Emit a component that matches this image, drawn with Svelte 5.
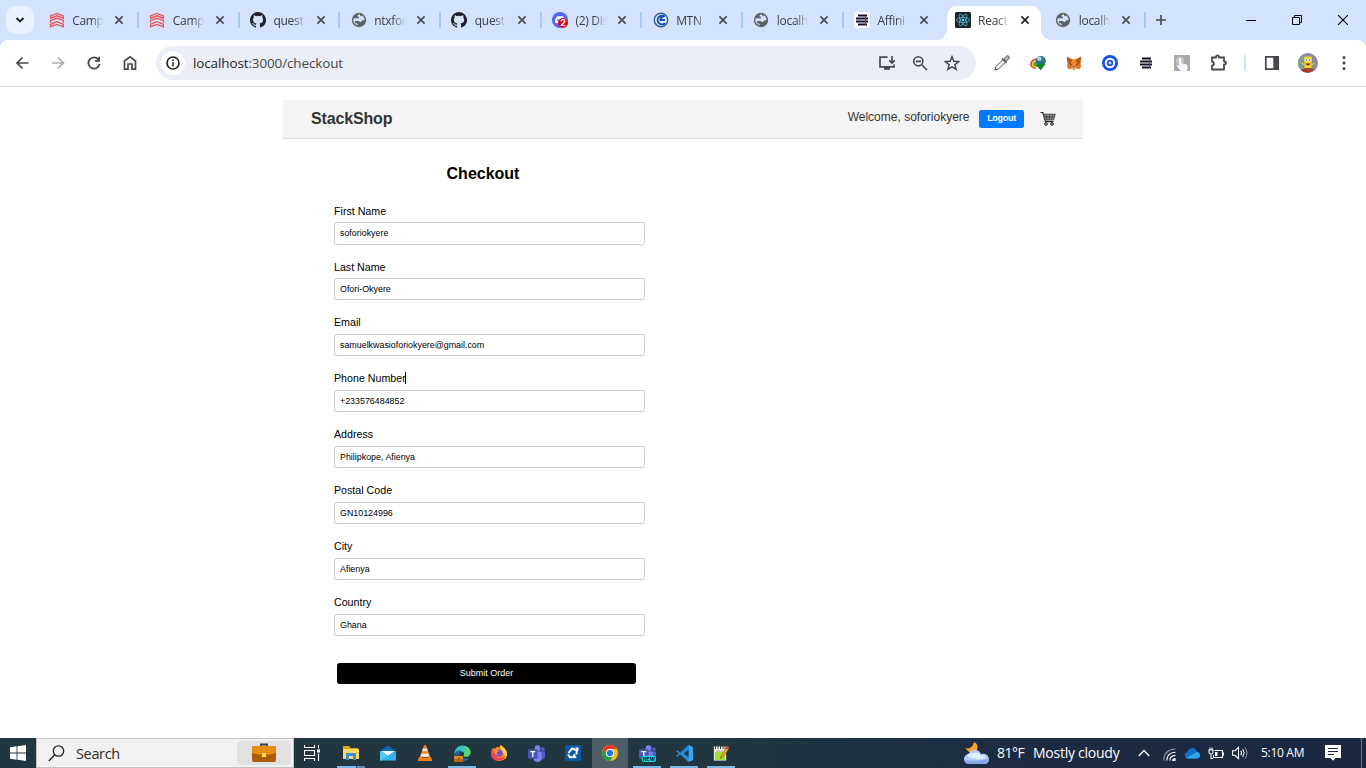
<script>
  const tabs = [
    { icon: 'campus', title: 'Camp' },
    { icon: 'campus', title: 'Camp' },
    { icon: 'github', title: 'quest-' },
    { icon: 'globe', title: 'ntxfor' },
    { icon: 'github', title: 'quest-' },
    { icon: 'discord', title: '(2) Dis' },
    { icon: 'mtn', title: 'MTN' },
    { icon: 'globe', title: 'localh' },
    { icon: 'affinity', title: 'Affini' },
    { icon: 'react', title: 'React', active: true },
    { icon: 'globe', title: 'localh' }
  ];
  const extensions = ['pipette', 'idm', 'fox', 'ring', 'stripes', 'hand', 'puzzle'];
  const fields = [
    { label: 'First Name', value: 'soforiokyere' },
    { label: 'Last Name', value: 'Ofori-Okyere' },
    { label: 'Email', value: 'samuelkwasioforiokyere@gmail.com' },
    { label: 'Phone Number', value: '+233576484852', caret: true },
    { label: 'Address', value: 'Philipkope, Afienya' },
    { label: 'Postal Code', value: 'GN10124996' },
    { label: 'City', value: 'Afienya' },
    { label: 'Country', value: 'Ghana' }
  ];
  const apps = [
    { icon: 'explorer', open: true, multi: true },
    { icon: 'mail' },
    { icon: 'vlc' },
    { icon: 'edge', open: true },
    { icon: 'firefox' },
    { icon: 'teams' },
    { icon: 'sync' },
    { icon: 'chrome', active: true },
    { icon: 'teamsnew', open: true },
    { icon: 'vscode', open: true },
    { icon: 'notepad', open: true }
  ];
</script>

{#snippet stripes()}
  <path d="M4 3.5h9M2 6.5h12M2 9.5h12M4 12.5h9" stroke="#12122c" stroke-width="1.8" fill="none" />
  <path d="M11.5 4v9" stroke="#2646ff" stroke-width="1" />
{/snippet}

{#snippet teams()}
  <circle cx="9" cy="3" r="2.7" fill="#7b83eb" /><circle cx="14" cy="4" r="1.8" fill="#5059c9" />
  <path d="M10 6h6v5a3 3 0 0 1-4 2.6z" fill="#5059c9" />
  <path d="M5 6h8v6a4 4 0 0 1-8 0z" fill="#7b83eb" />
  <rect x="0" y="4" width="9" height="9" rx="1" fill="#4b53bc" />
  <path d="M2.2 6.3h4.6M4.5 6.3v5" stroke="#fff" stroke-width="1.2" />
{/snippet}

{#snippet glyph(name)}
  {#if name === 'campus'}
    <svg width="16" height="16" viewBox="0 0 16 16"><g fill="none" stroke="#ec5459" stroke-width="1.3"><path d="M1.5 6.2V4L8 1.4 14.4 4v2.2L8 3.8z" /><path d="M1.5 10.7V8.5L8 6.3l6.4 2.2v2.2" /><path d="M1.500 14.800v-2.500L8 9.700l6.400 2.600v2.500L8 12.400z" /></g></svg>
  {:else if name === 'github'}
    <svg width="16" height="16" viewBox="0 0 16 16"><path fill="#1f2328" d="M8 0a8 8 0 0 0-2.53 15.59c.4.07.55-.17.55-.38v-1.49c-2.01.37-2.53-.49-2.69-.94-.09-.23-.48-.94-.82-1.13-.28-.15-.68-.52-.01-.53.63-.01 1.08.58 1.23.82.72 1.21 1.87.87 2.33.66.07-.52.28-.87.51-1.07-1.78-.2-3.64-.89-3.64-3.95 0-.87.31-1.59.82-2.15-.08-.2-.36-1.02.08-2.12 0 0 .67-.21 2.2.82a7.4 7.4 0 0 1 4 0c1.53-1.04 2.2-.82 2.2-.82.44 1.1.16 1.92.08 2.12.51.56.82 1.27.82 2.15 0 3.07-1.87 3.75-3.65 3.95.29.25.54.73.54 1.48v2.2c0 .21.15.46.55.38A8 8 0 0 0 8 0z" /></svg>
  {:else if name === 'globe'}
    <svg width="16" height="16" viewBox="0 0 16 16"><circle cx="8" cy="8" r="7.2" fill="#5f6368" /><path d="M9 2.3C7.300 2.500 6.500 3.300 6.700 4.200c.2.700 1.300.5 1.300 1.300 0 .9-1.100 1-2.200.9-1.700-.1-2.500-.1-3.400.4A5.700 5.700 0 0 0 6.800 13.500c.2-1-.8-1.500-1.200-2.300H4V9h3.500c1 .1.900 1.100 1.900 1.100 1.100 0 .9-1.100 1.800-1.500.9-.3 1.700-.1 2.500-.5A5.700 5.700 0 0 0 11 3.200c-.3 1.200-1.800 1.400-2 .6z" fill="#d3e3fd" /></svg>
  {:else if name === 'discord'}
    <svg width="16" height="16" viewBox="0 0 16 16"><circle cx="8" cy="8" r="8" fill="#5865f2" /><path d="M4.700 4.800 7 4.100l1 .5 1-.5 2.600.7 1.600 3.800v2l-2.500 1-1-1.200H6.300l-1 1.200-2.400-1 .3-3z" fill="#fff" /><circle cx="6.200" cy="8.100" r="1" fill="#5865f2" /><circle cx="11" cy="11" r="5" fill="#e00b16" /><text x="11" y="14.200" text-anchor="middle" font-family="Inter, sans-serif" font-weight="700" font-size="9" fill="#fff">2</text></svg>
  {:else if name === 'mtn'}
    <svg width="16" height="16" viewBox="0 0 16 16"><rect width="16" height="16" fill="#dce1e8" /><circle cx="8" cy="8" r="6.700" fill="#e8effa" stroke="#2458ac" stroke-width="1.400" /><path d="M11.700 4.800A4.300 4.300 0 1 0 12 11M12 8H7.500c0-2 1-3.300 3.200-4" fill="none" stroke="#1751b6" stroke-width="2" /></svg>
  {:else if name === 'affinity'}
    <svg width="16" height="16" viewBox="0 0 16 16"><rect width="16" height="16" rx="2" fill="#fff" />{@render stripes()}</svg>
  {:else if name === 'react'}
    <svg width="16" height="16" viewBox="0 0 16 16"><rect width="16" height="16" rx="1.500" fill="#20232a" /><g fill="none" stroke="#53bdd8" stroke-width=".8"><ellipse cx="8" cy="8" rx="6.600" ry="2.500" /><ellipse cx="8" cy="8" rx="6.600" ry="2.500" transform="rotate(60 8 8)" /><ellipse cx="8" cy="8" rx="6.600" ry="2.500" transform="rotate(120 8 8)" /></g><circle cx="8" cy="8" r="1.300" fill="#61dafb" /></svg>
  {:else if name === 'pipette'}
    <svg width="16" height="16" viewBox="0 0 16 16"><g fill="none" stroke="#46484c" stroke-width="1"><path d="M9 4.500 2 11.500l-1.200 3.600 3.700-1.100 7-7z" /><path d="m8 3.500 4.500 4.500" stroke-width="1.300" /><path d="m9.700 4.200 2.600-2.900a1.700 1.700 0 0 1 2.500 2.500l-2.900 2.600z" fill="#bbb" /></g></svg>
  {:else if name === 'idm'}
    <svg width="16" height="16" viewBox="0 0 16 16"><g fill="none" stroke-width="1.7"><path d="M7 4.200Q1 5 1 9.500q.5 3 5 3.500" stroke="#e8412e" /><path d="M7.500 5.800Q2.600 6.500 2.600 9.500q.5 2 4 2.500" stroke="#f7cd38" /><path d="M8 7.300Q4.200 7.500 4.200 9.500q.5 1 3 1.500" stroke="#35a43a" /></g><circle cx="10.800" cy="6" r="5.100" fill="#2c69a4" /><circle cx="9.300" cy="3.800" r="2.300" fill="#a8d7ee" /><path d="M12 2q3 1 3.800 4L13 8z" fill="#3b8b3a" /><path d="m5.500 9.500 3.200-.5V7h3.500v2l3.300.3-4.900 6z" fill="#168322" /></svg>
  {:else if name === 'fox'}
    <svg width="16" height="16" viewBox="0 0 18 16"><path d="m1 1 6 3h4l6-3-1 7 1 4-2 3-4-1-1 2H8l-1-2-4 1-2-3 1-4z" fill="#e2761b" /><path d="m1 1 6 3-1 4-4 1zM17 1l-6 3 1 4 4 1z" fill="#b9571c" /><path d="m7 4-1 4 2 4h2l2-4-1-4z" fill="#f08b2d" /><path d="m4.500 8.300 2.800 1.800-2.500.2zM13.500 8.300l-2.800 1.800 2.500.2z" fill="#333a48" /><path d="m7.500 12-.4 2 1 1h1.800l1-1-.4-2z" fill="#d5bfb2" /><path d="M8 12h2l-.4 1.200H8.400z" fill="#222" /></svg>
  {:else if name === 'ring'}
    <svg width="16" height="16" viewBox="0 0 16 16"><circle cx="8" cy="8" r="8" fill="#1652f0" /><circle cx="8" cy="8" r="4.200" fill="none" stroke="#fff" stroke-width="2" /><circle cx="8" cy="8" r="1.400" fill="#dce6ff" /></svg>
  {:else if name === 'stripes'}
    <svg width="16" height="16" viewBox="0 0 16 16">{@render stripes()}</svg>
  {:else if name === 'hand'}
    <svg width="16" height="16" viewBox="0 0 16 16"><rect width="16" height="16" rx="1" fill="#a8a8a8" /><circle cx="6" cy="5.500" r="4" fill="#c6c6c6" /><path d="M5 4.200a1 1 0 0 1 2.200 0v4l4.800 1c1.500.4 2 1.400 1.600 3L13 16H6.700L2.800 11c-.5-1 .7-1.500 1.500-.8l.8.7z" fill="#f5f8ff" /></svg>
  {:else if name === 'puzzle'}
    <svg width="18" height="18" viewBox="0 0 18 18"><path d="M3 3.500h4V3a1.500 1.500 0 0 1 3 0v.5h5v4h.5a1.500 1.500 0 0 1 0 3H15v5H3v-3.800c2.600-.4 2.600-3.700 0-4.200z" fill="none" stroke="#46484c" stroke-width="1.800" stroke-linejoin="round" /></svg>
  {:else if name === 'explorer'}
    <svg width="16" height="16" viewBox="0 0 16 16"><path d="M0 1h6l1.500 2H15v4H0z" fill="#e3a21a" /><path d="M0 4h16v10H0z" fill="#fdd663" /><path d="M3 8h10v7h-3v-4H6v4H3z" fill="#4191d9" /></svg>
  {:else if name === 'mail'}
    <svg width="16" height="16" viewBox="0 0 16 16"><path d="m0 6 8-5.500L16 6v9H0z" fill="#1267b2" /><path d="M1 6h14L8 11z" fill="#eef7ff" /><path d="m0 6 8 5 8-5v9.500H0z" fill="#35b1f0" /><path d="m0 6 8 5-7 4.500H0z" fill="#5cc9f8" /></svg>
  {:else if name === 'vlc'}
    <svg width="16" height="16" viewBox="0 0 16 16"><path d="M7 0h2l4.200 12H2.800z" fill="#ef7913" /><path d="m5.900 3.500-.8 2.700h5.800l-.9-2.700zM4.300 8.500 3.600 11q4.400 2 8.800 0l-.8-2.500z" fill="#eee" /><path d="M2 12h2q4 1.600 8 0h2l1.200 4H.8z" fill="#f18316" /></svg>
  {:else if name === 'edge'}
    <svg width="17" height="17" viewBox="0 0 17 17"><path d="M.5 9C.5 4 4 .5 8.500.5c4.500 0 8 3 8 6.700 0 3-2.200 4.600-4.700 4.600-1.800 0-2.600-.8-2-1.700.7-1.200.2-3.600-2.800-3.600C4 6.500 1.500 8 .5 9" fill="#3cc3c0" /><path d="M11 1c3.500 1 5.500 3.500 5.500 6.200 0 3-2.200 4.600-4.700 4.600-1.800 0-2.600-.8-2-1.700C11 7 11 3 11 1" fill="#5fd36a" /><path d="M.5 9c1-3 4-4.500 7-3.500C5.500 6.500 5.300 9 6.500 11c1.700 2.600 5.500 3.300 9 1.700-2.500 4-8 4.800-11.500 2.300Q.5 13 .5 9" fill="#1769b5" /><path d="M0 11h9v6H0z" fill="#dc8a16" /><path d="M0 14h9v3H0z" fill="#b06a0c" /><path d="M3 11V9.800h3V11M4 13.500h1.400" stroke="#6b390a" fill="none" /></svg>
  {:else if name === 'firefox'}
    <svg width="16" height="16" viewBox="0 0 16 16"><path d="M2 3c1 0 1 1 2 1 1-2 2-2 4-2 1 0 1-1 1-2 3 1 6 4 7 8 0 5-3 8-8 8-5 0-8-4-8-8 0-2 1-4 2-5" fill="#ff8b20" /><path d="M9 0c3 2 6 4 7 8 0 3-1 5-2 6 0-4-1-6-3-7 0-2-2-3-2-7" fill="#ffd43b" /><path d="M0 9c0 5 5 8 10 6 3-1 5-4 5-5-3 4-10 4-11-1-2-1-2-3-2-5-2 1-2 3-2 5" fill="#f43f54" /><circle cx="8" cy="8.200" r="3.600" fill="#8648d6" /><path d="M4 5c2 0 3 0 4 1L6 7c-1 1 0 3 2 3-2 1-4-1-4-3z" fill="#ffa52c" /></svg>
  {:else if name === 'teams'}
    <svg width="17" height="17" viewBox="0 0 16 16">{@render teams()}</svg>
  {:else if name === 'teamsnew'}
    <svg width="17" height="17" viewBox="0 0 16 16">{@render teams()}<rect x="2.500" y="10" width="13.500" height="6" rx="2" fill="#19d9df" /><text x="9.300" y="14.800" text-anchor="middle" font-family="Inter, sans-serif" font-weight="800" font-size="4.800" fill="#102d36">NEW</text></svg>
  {:else if name === 'sync'}
    <svg width="16" height="16" viewBox="0 0 16 16"><rect width="16" height="16" rx="1.500" fill="#0c58a5" /><path d="M3.500 8 7 3.500 12 5.200 11.300 9.500" fill="none" stroke="#fff" stroke-width="2" /><path d="M3 9.500 5 12.300 10 12 8.500 9.300" fill="none" stroke="#fff" stroke-width="2" /><path d="M10 2.500h3.500V6z" fill="#fff" /></svg>
  {:else if name === 'chrome'}
    <svg width="16" height="16" viewBox="0 0 16 16"><circle cx="8" cy="8" r="8" fill="#fbc116" /><path d="M1.100 4A8 8 0 0 1 15 4.100H8A4 4 0 0 0 4.500 10z" fill="#e33b2e" /><path d="M1.100 4A8 8 0 0 0 8 16l3.500-6A4 4 0 0 1 4.500 10z" fill="#229a4a" /><circle cx="8" cy="8" r="4" fill="#fff" /><circle cx="8" cy="8" r="3.100" fill="#1a73e8" /></svg>
  {:else if name === 'vscode'}
    <svg width="17" height="17" viewBox="0 0 16 16"><path d="M11.600 0 16 2v12l-4.400 2L4 8.900 1.300 11 0 10.300 2.600 8 0 5.700 1.300 5 4 7.100zM12 4.500 7.200 8l4.800 3.500z" fill="#2389d7" fill-rule="evenodd" /><path d="M12 .2 16 2v12l-4 1.800z" fill="#39a7f2" /></svg>
  {:else if name === 'notepad'}
    <svg width="16" height="16" viewBox="0 0 16 16"><rect x="1" y="1.500" width="12" height="14" fill="#f5f5ec" stroke="#aaa" stroke-width=".5" /><path d="M2 7h10v8H2z" fill="#a8df35" /><path d="M2.500 0v4M5 0v4M7.500 0v4M10 0v4M12 0v4" stroke="#333" stroke-width=".9" /><path d="M3 6h7" stroke="#999" /><path d="m8 11 5-8 2.500 1.500L10 12l-2.500 1.500z" fill="#f9aa18" stroke="#503b18" stroke-width=".5" /><path d="m13 3 1-2 2 1-.5 2.500z" fill="#d84d36" /></svg>
  {/if}
{/snippet}

<div class="screen">
  <div class="tabstrip">
    <div class="chev"><svg width="10" height="10" viewBox="0 0 10 10"><path d="m1.500 3 3.500 3.500L8.500 3" fill="none" stroke="#1f1f1f" stroke-width="1.900" /></svg></div>
    {#each tabs as tab, i}
      <div class="tab" class:active={tab.active} class:before={tabs[i + 1]?.active} class:after={tabs[i - 1]?.active}>
        {@render glyph(tab.icon)}
        <span class="title">{tab.title}</span>
        <svg class="close" width="10" height="10" viewBox="0 0 10 10"><path d="m1.400 1.400 7.200 7.200M8.600 1.400 1.400 8.600" stroke={tab.active ? '#1f1f1f' : '#46484c'} stroke-width="1.600" /></svg>
      </div>
    {/each}
    <svg class="plus" width="12" height="12" viewBox="0 0 12 12"><path d="M6 1v10M1 6h10" stroke="#46484c" stroke-width="1.600" /></svg>
    <div class="wincontrols">
      <svg width="10" height="10" viewBox="0 0 10 10"><path d="M0 5.500h10" stroke="#000" /></svg>
      <svg width="10" height="10" viewBox="0 0 10 10"><path d="M.5 2.500h7v7h-7zM2.500 2.500v-2h7v7h-2" fill="none" stroke="#000" /></svg>
      <svg width="10" height="10" viewBox="0 0 10 10"><path d="m0 0 10 10M10 0 0 10" stroke="#000" stroke-width="1.100" /></svg>
    </div>
  </div>

  <div class="toolbar">
    <div class="btn"><svg width="16" height="16" viewBox="0 0 16 16"><path d="M14.500 8H3M8.500 2.500 3 8l5.500 5.500" fill="none" stroke="#46484c" stroke-width="1.700" /></svg></div>
    <div class="btn"><svg width="16" height="16" viewBox="0 0 16 16"><path d="M2 8h11M8 2.500 13.500 8 8 13.500" fill="none" stroke="#adadad" stroke-width="1.700" /></svg></div>
    <div class="btn"><svg width="16" height="16" viewBox="0 0 16 16"><path d="M13.500 9A5.600 5.600 0 1 1 12.300 4.400L13.500 6" fill="none" stroke="#46484c" stroke-width="1.800" /><path d="M14 1.700v5H9V5h3.300V1.700z" fill="#46484c" /></svg></div>
    <div class="btn"><svg width="16" height="16" viewBox="0 0 16 16"><path d="M2.500 6 8 1.800 13.500 6v8.200H10V9H6v5.200H2.500z" fill="none" stroke="#46484c" stroke-width="1.700" /></svg></div>
    <div class="omnibox">
      <div class="info"><svg width="14" height="14" viewBox="0 0 14 14"><circle cx="7" cy="7" r="6" fill="none" stroke="#1f1f1f" stroke-width="1.600" /><path d="M7 6.200v4M7 3.600v1.500" stroke="#1f1f1f" stroke-width="1.500" /></svg></div>
      <span class="url"><b>localhost</b>:3000/checkout</span>
      <div class="obtns">
        <svg width="18" height="16" viewBox="0 0 18 16"><path d="M9.500 2.200H2v9.600h14V9.500M14 1v7M11.200 5.300 14 8l2.800-2.700" fill="none" stroke="#46484c" stroke-width="1.700" /><path d="M6 12h6v2.800H6z" fill="#46484c" /></svg>
        <svg width="16" height="16" viewBox="0 0 16 16"><path d="M10 10l5 5M4 6.300h5" stroke="#46484c" stroke-width="1.700" /><circle cx="6.300" cy="6.300" r="4.600" fill="none" stroke="#46484c" stroke-width="1.600" /></svg>
        <svg width="16" height="16" viewBox="0 0 16 16"><path d="m8 1.800 1.800 4.500 4.800.3-3.700 3.100 1.200 4.700L8 11.900l-4.100 2.500 1.200-4.700-3.700-3.100 4.800-.3z" fill="none" stroke="#46484c" stroke-width="1.500" /></svg>
      </div>
    </div>
    {#each extensions as name}
      <div class="btn">{@render glyph(name)}</div>
    {/each}
    <div class="divider"></div>
    <div class="btn"><svg width="16" height="16" viewBox="0 0 16 16"><path d="M1.800 1.800h12.400v12.400H1.800z" fill="none" stroke="#46484c" stroke-width="1.700" /><path d="M9.300 1.500H15v13H9.300z" fill="#46484c" /></svg></div>
    <div class="btn"><svg width="20" height="20" viewBox="0 0 20 20"><circle cx="10" cy="10" r="10" fill="#9384a4" /><path d="M0 10a10 10 0 0 1 8-9.800L5 10l1 9A10 10 0 0 1 0 10" fill="#7f9f8e" /><path d="M3 16h14a10 10 0 0 1-13 2z" fill="#b8322f" /><path d="M6 4q4-1.500 8 0l-.5 11h-7z" fill="#f0d62d" /><circle cx="8.500" cy="7" r="1.500" fill="#fff" /><circle cx="11.700" cy="7" r="1.500" fill="#fff" /><circle cx="8.600" cy="7" r=".8" fill="#29557b" /><circle cx="11.600" cy="7" r=".8" fill="#29557b" /><path d="M7.300 10.500h5.400q-2.700 4-5.400 0" fill="#7c251a" /><path d="M6.500 15h7v2h-7z" fill="#8e531d" /><path d="M3.500 9.500 6 12M16.500 9.500 14 12" stroke="#e4c928" stroke-width="1.400" /></svg></div>
    <div class="btn"><svg width="4" height="16" viewBox="0 0 4 16"><g fill="#46484c"><circle cx="2" cy="2.600" r="1.500" /><circle cx="2" cy="8" r="1.500" /><circle cx="2" cy="13.400" r="1.500" /></g></svg></div>
  </div>

  <main>
    <nav>
      <span class="brand">StackShop</span>
      <span class="welcome">Welcome, soforiokyere</span>
      <span class="logout">Logout</span>
      <svg class="cart" width="16" height="16" viewBox="0 0 16 16"><path d="M.5 1.500h2.300l2.700 9.200h8" fill="none" stroke="#222" stroke-width="1.200" /><path d="M3.600 3.200h11.700L13.500 9H5.300z" fill="#999" stroke="#333" stroke-width=".8" /><path d="M6.300 3.500 7 9M9.300 3.500V9M12.400 3.500 11.700 9M4.300 6h10.200" stroke="#333" stroke-width=".8" /><circle cx="6" cy="13" r="1.300" fill="#ddd" stroke="#111" /><circle cx="12" cy="13" r="1.300" fill="#ddd" stroke="#111" /></svg>
    </nav>
    <form>
      <h2>Checkout</h2>
      {#each fields as f}
        <div class="group">
          <div class="label">{f.label}{#if f.caret}<i class="caret"></i>{/if}</div>
          <div class="field">{f.value}</div>
        </div>
      {/each}
      <div class="submit">Submit Order</div>
    </form>
  </main>

  <div class="taskbar">
    <div class="start"><svg width="16" height="16" viewBox="0 0 16 16"><path d="M0 2.200 6.600 1.300v6.200H0zM7.400 1.200 16 0v7.500H7.400zM0 8.400h6.600v6.300L0 13.800zM7.400 8.400H16V16l-8.600-1.200z" fill="#fff" /></svg></div>
    <div class="search">
      <svg width="17" height="17" viewBox="0 0 17 17"><circle cx="10.500" cy="6" r="5.200" fill="none" stroke="#222" stroke-width="1.300" /><path d="M6.700 9.800.8 15.900" stroke="#222" stroke-width="1.400" /></svg>
      <span>Search</span>
      <div class="promo"><svg width="24" height="20" viewBox="0 0 24 20"><path d="M9 4V1.500h6V4" fill="none" stroke="#3d3d3d" stroke-width="1.800" /><rect y="3" width="24" height="16" rx="2" fill="#a95b09" /><path d="M0 5a2 2 0 0 1 2-2h20a2 2 0 0 1 2 2v5q-12 4-24 0z" fill="#e58d10" /><rect x="10" y="10" width="4" height="4" fill="#ffe03f" /></svg></div>
    </div>
    <div class="app view"><svg width="16" height="16" viewBox="0 0 16 16"><path d="M.5 0v2.500h10V0M.5 16v-2.500h10V16M.5 5.500h10v5H.5zM14.500 0v3.500M14.500 8.500V16" fill="none" stroke="#fff" stroke-width="1.100" /><path d="M13 4.500h3v3h-3z" fill="#fff" /></svg></div>
    {#each apps as app}
      <div class="app" class:open={app.open} class:multi={app.multi} class:current={app.active}>{@render glyph(app.icon)}</div>
    {/each}
    <div class="tray">
      <svg class="weather" width="25" height="24" viewBox="0 0 25 24"><path d="M10 1q5 2 3 8-2 4-8 2L1 7q7 2 9-6" fill="#f7a42b" /><path d="M5 23a5 5 0 0 1 0-10q2-5 7-4 3 0 5 4 7-1 8 5 0 5-5 5z" fill="#b4cdf7" /><path d="M5 23a5 5 0 0 1-4.600-4q10 2 24.500-1 0 5-5 5z" fill="#86a8e8" /><path d="M3 15q2-4 6-3 5-2 8 3 4-1 5 2-9 3-19-2" fill="#e1ecff" /></svg>
      <span class="temp">81°F</span><span class="cond">Mostly cloudy</span>
      <svg class="up" width="12" height="8" viewBox="0 0 12 8"><path d="m.7 7 5.300-5.500L11.300 7" fill="none" stroke="#fff" stroke-width="1.300" /></svg>
      <svg class="wifi" width="13" height="13" viewBox="0 0 13 13"><g fill="none" stroke="#8f9aa8" stroke-width="1.100"><path d="M.7 12.500Q1 1.500 12.500 1" /><path d="M3.800 12.500Q4 4.500 12.500 4.200" stroke="#fff" /><path d="M6.800 12.500Q7 7.500 12.500 7.400" stroke="#fff" /></g><path d="M9 13q0-3 3.500-3v3z" fill="#fff" /></svg>
      <svg class="cloud" width="16" height="11" viewBox="0 0 16 11"><path d="M3.500 10.500A3.400 3.400 0 0 1 3 4q2-4 6-4 3 .3 4 4 3 .5 3 3.400-.3 3-3 3.100z" fill="#0f6fc8" /><path d="m2 10 11-6q3 .6 3 3.500-.3 3-3 3H3.500z" fill="#28a8ea" /></svg>
      <svg class="batt" width="16" height="13" viewBox="0 0 16 13"><path d="M6.500 3.500h8v7h-9V8M15.500 5.500v3M1 3h4v2.200Q5 7 3 7T1 5.200zM2 3V.5M4 3V.5M3 7v4.500h2" fill="none" stroke="#fff" stroke-width="1.100" /><path d="M7 5h2.500v4H7z" fill="#fff" /></svg>
      <svg class="sound" width="16" height="14" viewBox="0 0 16 14"><path d="M.6 4.700h2.500L6.500 1.400v11.200L3.100 9.300H.6zM8.700 4.800q1.700 2.200 0 4.400" fill="none" stroke="#fff" stroke-width="1.100" /><path d="M10.700 3q3 4 0 8" fill="none" stroke="#fff" /><path d="M12.800 1.200q4.400 5.800 0 11.600" fill="none" stroke="#8b98aa" /></svg>
      <span class="time">5:10 AM</span>
      <svg class="note" width="16" height="16" viewBox="0 0 16 16"><path d="M0 0h16v13h-5.500L8 15.700 5.500 13H0z" fill="#fff" /><path d="M3 3.500h10M3 6.500h10M3 9.500h6" stroke="#1b2840" /></svg>
      <div class="desk"></div>
    </div>
  </div>
</div>

<style>
  :global(body) { margin: 0; background: #fff; overflow: hidden; }
  svg { display: block; flex: none; }
  .screen { width: 1366px; height: 768px; display: flex; flex-direction: column; background: #fff; font-family: "Liberation Sans", Arial, sans-serif; overflow: hidden; }
  .tabstrip { height: 40px; background: #d3e3fd; display: flex; align-items: center; box-sizing: border-box; padding-left: 6px; flex: none; }
  .chev { width: 28px; height: 28px; border-radius: 10px; background: #eaf1fe; display: grid; place-items: center; margin-right: 4.5px; }
  .tab { position: relative; width: 100.67px; height: 40px; box-sizing: border-box; padding-left: 10.2px; display: flex; align-items: center; flex: none; }
  .tab::after { content: ""; position: absolute; right: 0; top: 12px; width: 2px; height: 16px; background: #a8c7fa; }
  .tab.active::after, .tab.before::after { display: none; }
  .tab.active::before { content: ""; position: absolute; z-index: 0; left: 2.5px; top: 6px; width: 94px; height: 34px; background: #fff; border-radius: 10px 10px 0 0; }
  .tab.active > * { position: relative; }
  .tab.before { background: radial-gradient(circle at 0 0, transparent 9.6px, #fff 10px) 93.200px 30px / 10px 10px no-repeat; }
  .tab.active { background: radial-gradient(circle at 0 0, transparent 9.6px, #fff 10px) -7.5px 30px / 10px 10px no-repeat, radial-gradient(circle at 100% 0, transparent 9.6px, #fff 10px) 96.5px 30px / 10px 10px no-repeat; }
  .tab.after { background: radial-gradient(circle at 100% 0, transparent 9.6px, #fff 10px) -4.17px 30px / 10px 10px no-repeat; }
  .title { width: 32px; margin-left: 7.5px; white-space: nowrap; font: 12px/18px "Open Sans", sans-serif; letter-spacing: -.3px; color: #3c4043; -webkit-mask: linear-gradient(90deg, #000 60%, transparent 98%); mask: linear-gradient(90deg, #000 60%, transparent 98%); padding-top: 1px; }
  .tab > .close { margin-left: 10px; margin-top: 0; }
  .plus { margin-left: 9px; }
  .wincontrols { margin-left: auto; display: flex; gap: 36px; padding-right: 18px; }
  .toolbar { height: 47px; flex: none; box-sizing: border-box; border-bottom: 1px solid #dfe1e5; background: radial-gradient(circle at 100% 100%, #fff 7.6px, #d3e3fd 8px) 0 0 / 8px 8px no-repeat, radial-gradient(circle at 0 100%, #fff 7.6px, #d3e3fd 8px) 100% 0 / 8px 8px no-repeat, #fff; display: flex; align-items: center; padding: 0 4px; }
  .btn { width: 36px; height: 36px; display: grid; place-items: center; flex: none; }
  .omnibox { width: 820px; height: 34px; margin: 0 8px; border-radius: 17px; background: #ebeef7; display: flex; align-items: center; flex: none; box-sizing: border-box; padding: 0 16px 0 5px; }
  .info { width: 24px; height: 24px; border-radius: 50%; background: #fff; display: grid; place-items: center; }
  .url { margin-left: 8px; font: 13.5px/20px "Open Sans", sans-serif; color: #474747; letter-spacing: -.13px; }
  .url b { font-weight: 400; color: #1f1f1f; }
  .obtns { margin-left: auto; display: flex; align-items: center; gap: 16px; }
  .divider { width: 2px; height: 16px; background: #d3e3fd; margin: 0 8px; }
  main { height: 651px; flex: none; display: flex; flex-direction: column; align-items: center; padding-top: 13px; box-sizing: border-box; }
  nav { width: 800px; height: 39px; box-sizing: border-box; background: #f4f4f4; border-bottom: 1px solid #ddd; display: flex; align-items: center; padding: 0 27px 1px 28px; flex: none; }
  .brand { font-size: 16px; font-weight: 700; color: #333; margin-right: auto; letter-spacing: -.15px; }
  .welcome { font-size: 12px; color: #333; margin-top: -3px; }
  .logout { width: 45px; height: 18px; margin: 0 16px 0 9.5px; border-radius: 2.5px; background: #007bff; color: #fff; font-size: 9px; font-weight: 700; letter-spacing: -.3px; line-height: 17px; text-align: center; }
  form { width: 800px; box-sizing: border-box; padding: 25px 0 0 51px; }
  h2 { width: 298px; margin: 0 0 19px; font-size: 16px; line-height: 20px; text-align: center; }
  .group { height: 56px; }
  .label { display: flex; align-items: center; font-size: 10.67px; line-height: 12px; height: 16px; color: #000; margin-bottom: 3px; }
  .group:nth-of-type(n + 3) .label { height: 14px; margin-bottom: 5px; }
  .caret { width: 1px; height: 12px; background: #000; margin-left: -1px; }
  .field { width: 311px; height: 22px; box-sizing: border-box; border: 1px solid #ccc; border-radius: 2.5px; padding-left: 5px; font-size: 8.9px; line-height: 20px; color: #000; }
  .group:first-of-type .field { height: 23px; }
  .submit { width: 299px; height: 21px; margin: 12px 0 0 3px; border-radius: 3px; background: #000; color: #fff; font-size: 9px; line-height: 20px; text-align: center; }
  .taskbar { height: 30px; flex: none; display: flex; background: linear-gradient(90deg, #21363f, #21363f 52%, #1c2b43 75%, #1b2740); }
  .start { width: 36px; display: grid; place-items: center; }
  .search { width: 258px; box-sizing: border-box; border: 1px solid #c3c3c3; background: #f1f1f1; display: flex; align-items: center; padding: 0 2px 0 11px; }
  .search span { margin-left: 11px; font: 14.5px/20px "Open Sans", sans-serif; color: #2b2b2b; letter-spacing: -.35px; padding-top: 1px; }
  .promo { width: 54px; height: 24px; border-radius: 5px; background: #e1e1e1; margin-left: auto; display: grid; place-items: center; }
  .app { position: relative; width: 36px; margin-right: 1px; display: grid; place-items: center; flex: none; }
  .app.view { margin-right: 3px; }
  .app.open::after { content: ""; position: absolute; left: 4px; bottom: 0; width: 28px; height: 2px; background: #76b9ed; }
  .app.multi::after { background: linear-gradient(90deg, #76b9ed 19px, #35596f 19px, #35596f 20px, #5d8fb4 20px); }
  .app.current { background: #4d5e66; }
  .tray { margin-left: auto; display: flex; align-items: center; color: #fff; font: 14px/20px "Open Sans", sans-serif; white-space: nowrap; }
  .temp { width: 28px; margin-left: 8px; letter-spacing: -.5px; }
  .cond { width: 87px; margin-left: 8px; letter-spacing: -.25px; }
  .up { margin-left: 18px; }
  .wifi { margin: 2px 0 0 13px; }
  .cloud { margin-left: 8px; }
  .batt { margin-left: 8px; }
  .sound { margin-left: 8px; }
  .time { width: 44px; margin-left: 13px; font-size: 12px; letter-spacing: -.3px; }
  .note { margin-left: 20px; }
  .desk { width: 1px; height: 30px; background: #657080; margin: 0 4px 0 20px; }
</style>
